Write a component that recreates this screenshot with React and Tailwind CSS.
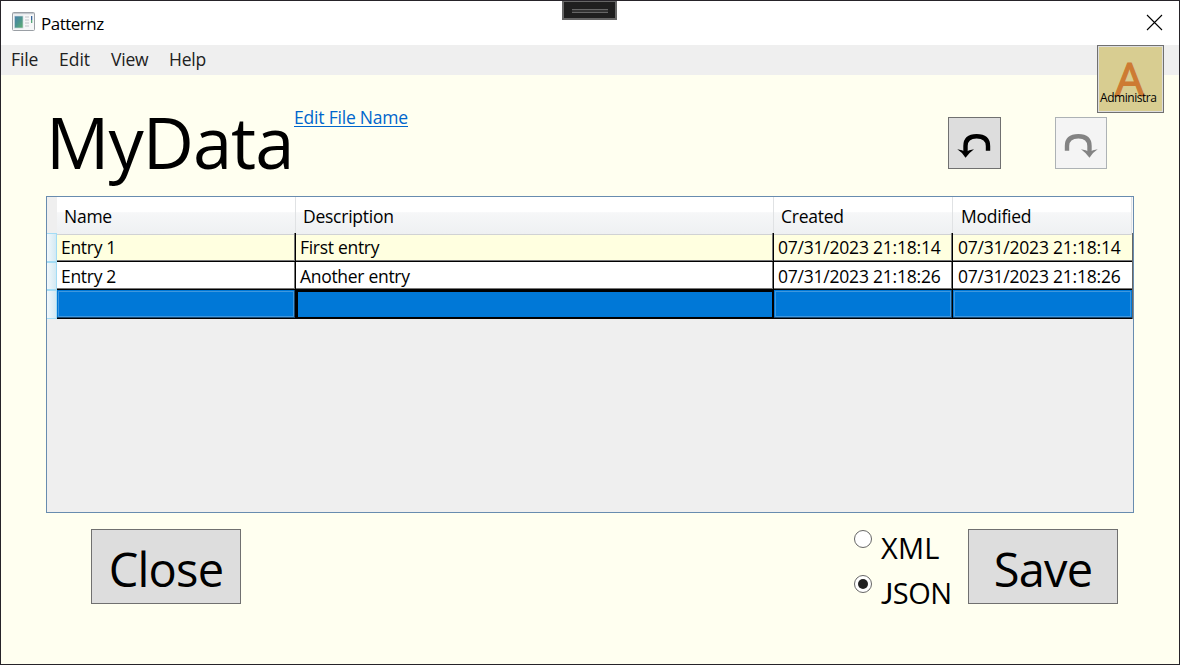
import React from "react";

const entries = [
  { name: "Entry 1", description: "First entry", date: "07/31/2023 21:18:14" },
  { name: "Entry 2", description: "Another entry", date: "07/31/2023 21:18:26" },
];

const columns = "grid grid-cols-[10px_239px_478px_179px_179px_1px]";

function AppIcon() {
  return (
    <svg width="24" height="20" viewBox="0 0 24 20" className="block shrink-0">
      <defs>
        <linearGradient id="pane" x1="0" y1="0" x2="1" y2="1">
          <stop offset="0" stopColor="#4a7fae" />
          <stop offset="0.5" stopColor="#4c948f" />
          <stop offset="1" stopColor="#62b26f" />
        </linearGradient>
      </defs>
      <rect x="0.5" y="0.5" width="22" height="18" rx="1" fill="#f6f7f8" stroke="#9a9fa5" />
      <rect x="1" y="1" width="21" height="1.2" fill="#c3c8ce" />
      <rect x="2.5" y="4" width="8.5" height="12" fill="url(#pane)" stroke="#c9d4dc" strokeWidth="0.7" />
      <path d="M13 5h4M13 8h4M13 11h4M13 14h4" stroke="#d2d5d8" strokeWidth="1.6" />
      <rect x="19" y="4" width="1.3" height="4" fill="#36659a" />
      <rect x="19" y="8" width="1.3" height="3" fill="#58a67a" />
    </svg>
  );
}

function UndoArrow({ color, flip }) {
  return (
    <svg width="34" height="24" viewBox="0 0 34 24" className={flip ? "block -scale-x-100" : "block"}>
      <path d="M8.5 19V12C8.5 5 13 2.2 19.6 2.2C26.4 2.2 31 5 31 12V16.8" fill="none" stroke={color} strokeWidth="4.4" />
      <path d="M0.3 15.3Q5.5 16 8.5 18Q12 16 17 15.3Q12.5 18.5 8.5 23.8Q5.5 18.5 0.3 15.3Z" fill={color} />
    </svg>
  );
}

function HeaderCell({ children }) {
  return (
    <div className="border-r border-[#e0e2e4] bg-linear-to-b from-white from-40% via-[#f6f7f8] via-41% to-[#eef0f2] pl-[7px] leading-[38px] tracking-[-0.25px] shadow-[inset_0_-1px_0_#d0d2d4]">
      {children}
    </div>
  );
}

function RowHead() {
  return <div className="border border-l-0 border-[#a3dcf5] bg-linear-to-r from-[#f3f9fc] to-[#d3e9f3]" />;
}

function Cell({ children, last }) {
  return (
    <div
      className={
        "overflow-hidden whitespace-nowrap border-b border-black leading-[28px] tracking-[-0.3px] " +
        (last
          ? "pl-[5px] shadow-[inset_0_-1px_0_#777]"
          : "border-r pl-[4px] shadow-[inset_-1px_-1px_0_#777]")
      }
    >
      {children}
    </div>
  );
}

function BlankCell() {
  return (
    <div className="border-r border-b border-black bg-[#0078d7] shadow-[inset_-1px_-1px_0_#16456d,inset_0_0_0_1px_#0078d7,inset_0_0_0_2px_#3f97dd]" />
  );
}

function Radio({ label, checked }) {
  return (
    <label className="flex h-[45px] items-start">
      <span className="flex size-[18px] shrink-0 items-center justify-center rounded-full border border-[#666] bg-white">
        {checked && <span className="size-[10px] rounded-full bg-[#212121]" />}
      </span>
      <span className="ml-[9px] text-[29px] leading-[36px]">{label}</span>
    </label>
  );
}

export default function App() {
  return (
    <div className="relative flex h-[665px] w-[1180px] flex-col overflow-hidden border border-[#262329] bg-[#fffff0] font-['Open_Sans',sans-serif] text-[17.5px] text-black">
      <header className="flex h-[44px] shrink-0 items-center justify-between bg-white pb-[2px] pl-[11px] pr-[16px]">
        <div className="flex items-center">
          <AppIcon />
          <span className="ml-[5px] pt-[3px] text-[17px] leading-6 tracking-[-0.5px]">Patternz</span>
        </div>
        <svg width="17" height="17" viewBox="0 0 17 17" className="block">
          <path d="M1 1L16 16M16 1L1 16" stroke="#000" strokeWidth="1.1" />
        </svg>
      </header>
      <nav className="flex h-[30px] shrink-0 bg-[#efefef] pl-[10px] leading-[29px] text-[#212121]">
        <span className="w-[48px] tracking-[-0.1px]">File</span>
        <span className="w-[52px]">Edit</span>
        <span className="w-[58px] tracking-[-0.2px]">View</span>
        <span className="tracking-[-0.2px]">Help</span>
      </nav>

      <section className="flex h-[121px] shrink-0 items-start pl-[45px]">
        <h1 className="w-[248px] whitespace-nowrap pt-[21px] text-[70.5px] leading-[92px] tracking-[-1px]">MyData</h1>
        <a className="mt-[30px] whitespace-nowrap leading-6 tracking-[-0.2px] text-[#0066cc] underline decoration-1 underline-offset-2">Edit File Name</a>
        <div className="ml-auto mr-[72px] mt-[42px] flex gap-[54px]">
          <button className="flex h-[52px] w-[53px] items-center justify-center border border-[#707070] bg-[#dddddd] pr-px pt-[5px]">
            <UndoArrow color="#000" />
          </button>
          <button className="flex size-[52px] items-center justify-center border border-[#adb2b5] bg-[#f4f4f4] pt-[5px]">
            <UndoArrow color="#838383" flip />
          </button>
        </div>
      </section>

      <main className="ml-[45px] h-[317px] w-[1088px] shrink-0 border border-[#688caf] bg-[#efefef]">
        <div className={columns + " h-[36px]"}>
          <div />
          <HeaderCell>Name</HeaderCell>
          <HeaderCell>Description</HeaderCell>
          <HeaderCell>Created</HeaderCell>
          <HeaderCell><span className="ml-px">Modified</span></HeaderCell>
          <div className="bg-[#f6f7f8]" />
        </div>
        {entries.map((e, i) => (
          <div key={e.name} className={columns + (i === 0 ? " h-[29px] bg-[#ffffe0]" : " h-[28px] bg-white")}>
            <RowHead />
            <Cell>{e.name}</Cell>
            <Cell>{e.description}</Cell>
            <Cell><span className="tracking-[-0.22px]">{e.date}</span></Cell>
            <Cell last><span className="tracking-[-0.22px]">{e.date}</span></Cell>
            <div className="bg-[#666]" />
          </div>
        ))}
        <div className={columns + " h-[29px]"}>
          <RowHead />
          <BlankCell />
          <div className="border-2 border-black bg-[#0078d7]" />
          <BlankCell />
          <div className="border-b border-black bg-[#0078d7] shadow-[inset_0_-1px_0_#16456d,inset_0_0_0_1px_#0078d7,inset_0_0_0_2px_#3f97dd]" />
          <div className="bg-[#666]" />
        </div>
      </main>

      <footer className="flex items-start pl-[90px] pt-[16px]">
        <button className="h-[75px] w-[150px] border border-[#707070] bg-[#dddddd] pt-[4px] text-[47px] leading-[68px] tracking-[-0.8px]">Close</button>
        <div className="ml-[613px] w-[114px] pt-[1px]">
          <Radio label={<span className="tracking-[0.2px]">XML</span>} />
          <Radio
            label={<span className="tracking-[-0.5px]"><span className="font-['Lato',sans-serif]">J</span>SON</span>}
            checked
          />
        </div>
        <button className="h-[75px] w-[150px] border border-[#707070] bg-[#dddddd] pt-[4px] text-[47px] leading-[68px] tracking-[-0.8px]">Save</button>
      </footer>

      <div className="absolute left-[561px] top-[-1px] flex h-[20px] w-[55px] items-center justify-center border-2 border-[#666] bg-[#1f1f1f] pt-[2px]">
        <div className="h-1 w-9 border-y border-[#666] bg-[#333]" />
      </div>
      <button className="absolute left-[1096px] top-[44px] h-[68px] w-[67px] border border-[#707070] bg-[#dddddd] p-px">
        <div className="relative h-full w-full overflow-hidden bg-[#d8cd91]">
          <span className="absolute left-[16px] top-[1px] text-[46px] leading-[60px] text-[#cd7b33] [-webkit-text-stroke:1.2px_#cd7b33]">A</span>
          <span className="absolute left-[1px] top-[43px] text-[12px] leading-[16px] tracking-[-0.45px]">Administra</span>
        </div>
      </button>
    </div>
  );
}
